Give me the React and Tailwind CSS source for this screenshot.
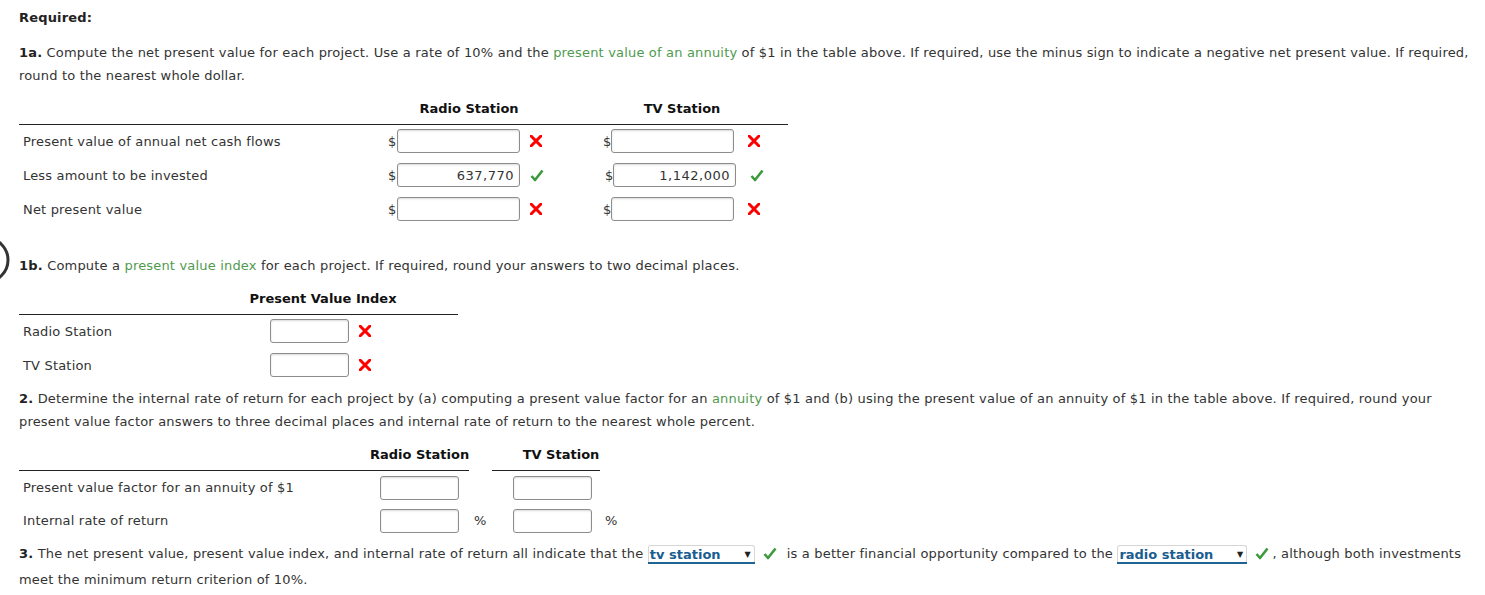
import React from 'react'

const font = { fontFamily: '"DejaVu Sans", Verdana, sans-serif' }

const Cross = () => (
  <svg width="12" height="12" viewBox="0 0 12 12" className="shrink-0">
    <path d="M1 1 L11 11 M11 1 L1 11" stroke="#ff0000" strokeWidth="3" strokeLinecap="square" />
  </svg>
)

const Check = () => (
  <svg width="14" height="13" viewBox="0 0 14 13" className="shrink-0">
    <path d="M1.5 7 L5 11 L12.5 1.5" stroke="#3c9a3c" strokeWidth="2.6" fill="none" strokeLinejoin="round" />
  </svg>
)

const Box = ({ w, value }) => (
  <div
    className={`${w} h-[24px] bg-white border border-[#8d8d8d] rounded-[3px] shadow-[inset_0_1px_2px_rgba(0,0,0,0.15)] flex items-center justify-end pr-[5px] text-[13px] text-[#333] tracking-[0.5px]`}
  >
    {value}
  </div>
)

const Dropdown = ({ label, w }) => (
  <span className={`inline-flex ${w} h-[17px] items-end justify-between border border-b-0 border-[#d6d6d6] rounded-t-[3px] align-[-1px] relative`}>
    <span className="font-bold text-[#1a5d8f] leading-[15px] pl-[1px] tracking-normal">{label}</span>
    <span className="text-[8px] text-[#222] leading-[14px] pr-[3px]">▼</span>
    <span className="absolute left-[-1px] right-[-1px] bottom-[-2px] h-[2px] bg-[#1f6394]" />
  </span>
)

const Row1 = ({ label, a, b, markA, markB }) => (
  <div className="flex items-center h-[34px]">
    <div className="w-[369px] pl-[4px]">{label}</div>
    <span className="w-[9px]">$</span>
    <Box w="w-[123px]" value={a} />
    <span className="ml-[10px]">{markA}</span>
    <span className="ml-[61px] w-[8px]">$</span>
    <Box w="w-[123px]" value={b} />
    <span className="ml-[14px]">{markB}</span>
  </div>
)

export default function App() {
  return (
    <div className="relative bg-white text-[13px] leading-[23px] tracking-[0.18px] text-[#333] pl-[19px] pt-[6px] h-[595px] overflow-hidden" style={font}>
      <svg className="absolute left-0 top-[235px]" width="12" height="50" viewBox="0 0 12 50">
        <circle cx="-14" cy="25" r="22" stroke="#333" strokeWidth="3" fill="none" />
      </svg>

      <div className="font-bold text-[#222]">Required:</div>

      <p className="mt-[12px] whitespace-nowrap">
        <b className="text-[#222]">1a.</b> Compute the net present value for each project. Use a rate of 10% and the{' '}
        <span className="text-[#4f9a4f]">present value of an annuity</span> of $1 in the table above. If required, use the minus sign to indicate a negative net present value. If required,
        <br />
        round to the nearest whole dollar.
      </p>

      <div className="mt-[10px] w-[769px] border-b border-[#222] pb-[4px] flex font-bold text-[#111] whitespace-nowrap tracking-normal">
        <div className="w-[361px]" />
        <div className="w-[178px] text-center">Radio Station</div>
        <div className="w-[230px] pl-[18px] text-center">TV Station</div>
      </div>
      <div className="-mt-[1px]">
        <Row1 label="Present value of annual net cash flows" a="" b="" markA={<Cross />} markB={<Cross />} />
        <Row1 label="Less amount to be invested" a="637,770" b="1,142,000" markA={<Check />} markB={<Check />} />
        <Row1 label="Net present value" a="" b="" markA={<Cross />} markB={<Cross />} />
      </div>

      <p className="mt-[28px] whitespace-nowrap">
        <b className="text-[#222]">1b.</b> Compute a <span className="text-[#4f9a4f]">present value index</span> for each project. If required, round your answers to two decimal places.
      </p>

      <div className="mt-[10px] w-[439px] border-b border-[#222] pb-[4px] pl-[169px] text-center font-bold text-[#111] whitespace-nowrap tracking-normal">
        Present Value Index
      </div>
      <div className="-mt-[1px]">
        {['Radio Station', 'TV Station'].map((l) => (
          <div key={l} className="flex items-center h-[34px]">
            <div className="w-[251px] pl-[4px]">{l}</div>
            <Box w="w-[79px]" value="" />
            <span className="ml-[10px]"><Cross /></span>
          </div>
        ))}
      </div>

      <p className="mt-[5px] whitespace-nowrap">
        <b className="text-[#222]">2.</b> Determine the internal rate of return for each project by (a) computing a present value factor for an{' '}
        <span className="text-[#4f9a4f]">annuity</span> of $1 and (b) using the present value of an annuity of $1 in the table above. If required, round your
        <br />
        present value factor answers to three decimal places and internal rate of return to the nearest whole percent.
      </p>

      <div className="mt-[10px] flex font-bold text-[#111] whitespace-nowrap tracking-normal">
        <div className="w-[351px] border-b border-[#222] pb-[4px]" />
        <div className="w-[99px] border-b border-[#222] pb-[4px] text-center">Radio Station</div>
        <div className="w-[23px]" />
        <div className="w-[108px] border-b border-[#222] pb-[4px] pl-[30px] text-center">TV Station</div>
      </div>
      {[
        ['Present value factor for an annuity of $1', false],
        ['Internal rate of return', true],
      ].map(([l, pct]) => (
        <div key={l} className="flex items-center h-[33px]">
          <div className="w-[361px] pl-[4px]">{l}</div>
          <div className="w-[133px] flex items-center">
            <Box w="w-[79px]" value="" />
            {pct && <span className="ml-[15px]">%</span>}
          </div>
          <div className="flex items-center">
            <Box w="w-[79px]" value="" />
            {pct && <span className="ml-[13px]">%</span>}
          </div>
        </div>
      ))}

      <p className="mt-[4px] leading-[26px] whitespace-nowrap">
        <b className="text-[#222]">3.</b> The net present value, present value index, and internal rate of return all indicate that the{' '}
        <Dropdown label="tv station" w="w-[107px]" />
        <span className="inline-block align-[-2px] ml-[8px] mr-[10px]"><Check /></span>
        is a better financial opportunity compared to the <Dropdown label="radio station" w="w-[130px]" />
        <span className="inline-block align-[-2px] ml-[8px] mr-[3px]"><Check /></span>, although both investments
        <br />
        meet the minimum return criterion of 10%.
      </p>
    </div>
  )
}
